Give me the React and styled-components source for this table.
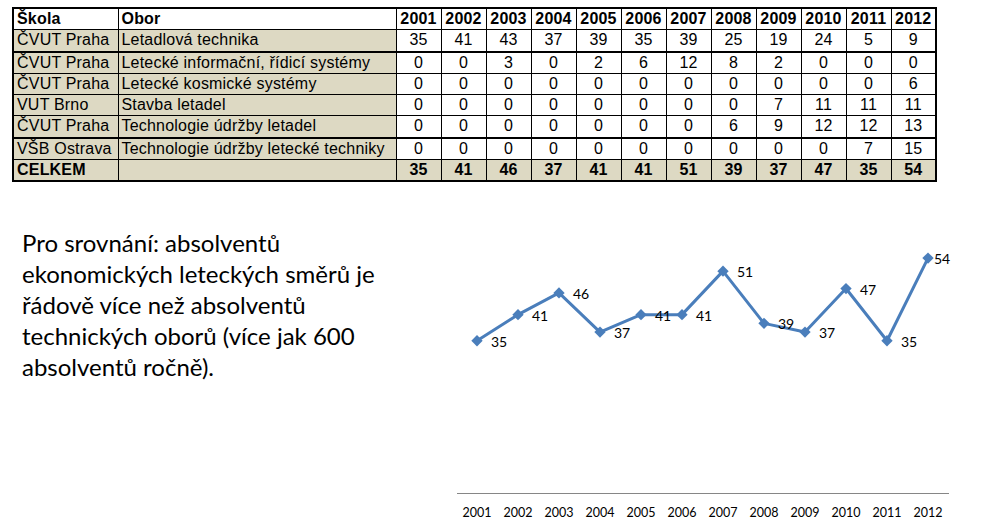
import React from 'react';
import styled, { createGlobalStyle } from 'styled-components';

const GlobalStyle = createGlobalStyle`
    body {
        margin: 0;
        background: #ffffff;
    }
`;

const Page = styled.div`
    width: 984px;
    height: 525px;
    padding: 7px 0 0 12px;
    box-sizing: border-box;
    overflow: hidden;
`;

const Table = styled.table`
    border-collapse: collapse;
    table-layout: fixed;
    width: 925px;
    border: 2px solid #000;
    font-family: "Liberation Sans", Arial, sans-serif;
    font-size: 16px;
    color: #000;
`;

const Cell = styled.td`
    height: 20.25px;
    padding: 0 3px;
    border: 1px solid #000;
    border-bottom-width: ${p => (p.$thick ? '2px' : '1px')};
    background: ${p => (p.$tan ? '#ddd9c3' : '#ffffff')};
    font-weight: ${p => (p.$bold ? 700 : 400)};
    text-align: ${p => (p.$center ? 'center' : 'left')};
    white-space: nowrap;
    overflow: hidden;
    line-height: 20px;
    letter-spacing: 0.2px;
`;

const Lower = styled.div`
    display: flex;
    margin-top: 47px;
`;

const Note = styled.p`
    width: 428px;
    margin: -2px 0 0;
    padding-left: 10px;
    font-family: Lato, "Open Sans", sans-serif;
    font-size: 24px;
    line-height: 31px;
    color: #000;
    white-space: nowrap;
`;

const Chart = styled.svg`
    display: block;
    flex: none;
    font-family: Lato, "Open Sans", sans-serif;
`;

const years = [2001, 2002, 2003, 2004, 2005, 2006, 2007, 2008, 2009, 2010, 2011, 2012];

const rows = [
    { school: 'ČVUT Praha', field: 'Letadlová technika', values: [35, 41, 43, 37, 39, 35, 39, 25, 19, 24, 5, 9], thick: true },
    { school: 'ČVUT Praha', field: 'Letecké informační, řídicí systémy', values: [0, 0, 3, 0, 2, 6, 12, 8, 2, 0, 0, 0] },
    { school: 'ČVUT Praha', field: 'Letecké kosmické systémy', values: [0, 0, 0, 0, 0, 0, 0, 0, 0, 0, 0, 6] },
    { school: 'VUT Brno', field: 'Stavba letadel', values: [0, 0, 0, 0, 0, 0, 0, 0, 7, 11, 11, 11] },
    { school: 'ČVUT Praha', field: 'Technologie údržby letadel', values: [0, 0, 0, 0, 0, 0, 0, 6, 9, 12, 12, 13], thick: true },
    { school: 'VŠB Ostrava', field: 'Technologie údržby letecké techniky', values: [0, 0, 0, 0, 0, 0, 0, 0, 0, 0, 7, 15] },
];

const totals = years.map((_, i) => rows.reduce((sum, r) => sum + r.values[i], 0));

// chart sits at x=450, y=230 of the page
const px = i => 27 + 41 * i;
const py = v => 264 - v * 4.35;

const LineChart = () => {
    const points = totals.map((v, i) => `${px(i)},${py(v)}`).join(' ');
    return (
        <Chart width="534" height="295" viewBox="0 0 534 295">
            <line x1="7" y1="264.5" x2="499" y2="264.5" stroke="#868686" strokeWidth="1" />
            <polyline points={points} fill="none" stroke="#4a7ebb" strokeWidth="3" strokeLinejoin="round" />
            {totals.map((v, i) => (
                <g key={i}>
                    <rect x={px(i) - 4} y={py(v) - 4} width="8" height="8" fill="#4a7ebb"
                        transform={`rotate(45 ${px(i)} ${py(v)})`} />
                    <text x={px(i) + (i === totals.length - 1 ? 6 : 14)} y={py(v) + 6} fontSize="14" fill="#000">{v}</text>
                </g>
            ))}
            {years.map((y, i) => (
                <text key={y} x={px(i)} y="288" fontSize="12.5" textAnchor="middle" fill="#000">{y}</text>
            ))}
        </Chart>
    );
};

const App = () => (
    <>
        <GlobalStyle />
        <Page>
            <Table>
                <colgroup>
                    <col style={{ width: '105px' }} />
                    <col style={{ width: '278px' }} />
                    {years.map(y => <col key={y} />)}
                </colgroup>
                <tbody>
                    <tr>
                        <Cell $bold>Škola</Cell>
                        <Cell $bold>Obor</Cell>
                        {years.map(y => <Cell key={y} $bold $center>{y}</Cell>)}
                    </tr>
                    {rows.map((r, ri) => (
                        <tr key={ri}>
                            <Cell $tan $thick={r.thick}>{r.school}</Cell>
                            <Cell $tan $thick={r.thick}>{r.field}</Cell>
                            {r.values.map((v, i) => <Cell key={i} $center $thick={r.thick}>{v}</Cell>)}
                        </tr>
                    ))}
                    <tr>
                        <Cell $tan $bold>CELKEM</Cell>
                        <Cell $tan />
                        {totals.map((v, i) => <Cell key={i} $tan $bold $center>{v}</Cell>)}
                    </tr>
                </tbody>
            </Table>
            <Lower>
                <Note>
                    Pro srovnání: absolventů<br />
                    ekonomických leteckých směrů je<br />
                    řádově více než absolventů<br />
                    technických oborů (více jak 600<br />
                    absolventů ročně).
                </Note>
                <LineChart />
            </Lower>
        </Page>
    </>
);

export default App;
